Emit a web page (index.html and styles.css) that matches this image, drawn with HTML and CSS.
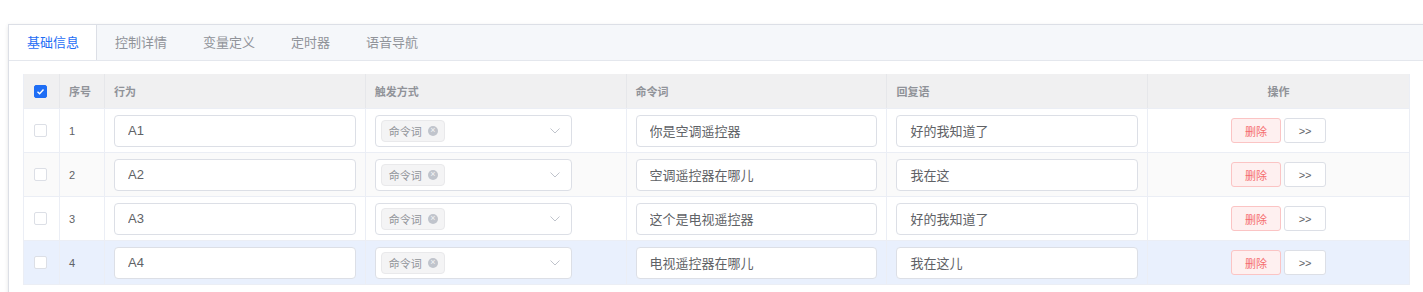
FILE: index.html
```html
<!DOCTYPE html>
<html lang="zh-CN">
<head>
    <meta charset="UTF-8">
    <title>行为配置</title>
    <link rel="stylesheet" href="styles.css">
</head>
<body>
    <div class="page">
        <div class="tab-card">
            <div class="tab-header">
                <div class="tab active">基础信息</div>
                <div class="tab">控制详情</div>
                <div class="tab">变量定义</div>
                <div class="tab">定时器</div>
                <div class="tab">语音导航</div>
            </div>

            <div class="tab-content">
                <div class="table">
                    <div class="row head">
                        <div class="cell"><span class="checkbox checked"><svg viewBox="0 0 13 13" width="13" height="13"><polyline points="3.5,6.8 5.6,8.8 9.5,4.6" fill="none" stroke="#fff" stroke-width="1.4"/></svg></span></div>
                        <div class="cell">序号</div>
                        <div class="cell">行为</div>
                        <div class="cell">触发方式</div>
                        <div class="cell">命令词</div>
                        <div class="cell">回复语</div>
                        <div class="cell center">操作</div>
                    </div>

                    <div class="row">
                        <div class="cell"><span class="checkbox"></span></div>
                        <div class="cell num">1</div>
                        <div class="cell"><input class="field" value="A1"></div>
                        <div class="cell">
                            <div class="select">
                                <span class="tag">命令词<i class="tag-close">×</i></span>
                                <svg class="arrow" viewBox="0 0 10 6" width="10" height="6"><polyline points="0.5,0.5 5,5 9.5,0.5" fill="none" stroke="#c0c4cc" stroke-width="1"/></svg>
                            </div>
                        </div>
                        <div class="cell"><input class="field" value="你是空调遥控器"></div>
                        <div class="cell"><input class="field" value="好的我知道了"></div>
                        <div class="cell center"><button class="btn danger">删除</button><button class="btn more">&gt;&gt;</button></div>
                    </div>

                    <div class="row striped">
                        <div class="cell"><span class="checkbox"></span></div>
                        <div class="cell num">2</div>
                        <div class="cell"><input class="field" value="A2"></div>
                        <div class="cell">
                            <div class="select">
                                <span class="tag">命令词<i class="tag-close">×</i></span>
                                <svg class="arrow" viewBox="0 0 10 6" width="10" height="6"><polyline points="0.5,0.5 5,5 9.5,0.5" fill="none" stroke="#c0c4cc" stroke-width="1"/></svg>
                            </div>
                        </div>
                        <div class="cell"><input class="field" value="空调遥控器在哪儿"></div>
                        <div class="cell"><input class="field" value="我在这"></div>
                        <div class="cell center"><button class="btn danger">删除</button><button class="btn more">&gt;&gt;</button></div>
                    </div>

                    <div class="row">
                        <div class="cell"><span class="checkbox"></span></div>
                        <div class="cell num">3</div>
                        <div class="cell"><input class="field" value="A3"></div>
                        <div class="cell">
                            <div class="select">
                                <span class="tag">命令词<i class="tag-close">×</i></span>
                                <svg class="arrow" viewBox="0 0 10 6" width="10" height="6"><polyline points="0.5,0.5 5,5 9.5,0.5" fill="none" stroke="#c0c4cc" stroke-width="1"/></svg>
                            </div>
                        </div>
                        <div class="cell"><input class="field" value="这个是电视遥控器"></div>
                        <div class="cell"><input class="field" value="好的我知道了"></div>
                        <div class="cell center"><button class="btn danger">删除</button><button class="btn more">&gt;&gt;</button></div>
                    </div>

                    <div class="row hover">
                        <div class="cell"><span class="checkbox"></span></div>
                        <div class="cell num">4</div>
                        <div class="cell"><input class="field" value="A4"></div>
                        <div class="cell">
                            <div class="select">
                                <span class="tag">命令词<i class="tag-close">×</i></span>
                                <svg class="arrow" viewBox="0 0 10 6" width="10" height="6"><polyline points="0.5,0.5 5,5 9.5,0.5" fill="none" stroke="#c0c4cc" stroke-width="1"/></svg>
                            </div>
                        </div>
                        <div class="cell"><input class="field" value="电视遥控器在哪儿"></div>
                        <div class="cell"><input class="field" value="我在这儿"></div>
                        <div class="cell center"><button class="btn danger">删除</button><button class="btn more">&gt;&gt;</button></div>
                    </div>
                </div>
            </div>
        </div>
    </div>
</body>
</html>
```

FILE: styles.css
```css
* {
    margin: 0;
    padding: 0;
    box-sizing: border-box;
}

body {
    font-family: 'Liberation Sans', 'Noto Sans CJK SC', sans-serif;
    background: #fff;
    overflow: hidden;
}

.page {
    padding: 24px 0 0 8px;
}

.tab-card {
    width: 1418px;
    border: 1px solid #dcdfe6;
    background: #fff;
    box-shadow: 0 2px 4px rgba(0, 0, 0, 0.08), 0 0 6px rgba(0, 0, 0, 0.03);
}

.tab-header {
    display: flex;
    height: 36px;
    background: #f5f7fa;
    border-bottom: 1px solid #e4e7ed;
}

.tab {
    padding: 0 18px;
    line-height: 35px;
    font-size: 13px;
    color: #909399;
}

.tab.active {
    background: #fff;
    color: #1f6ef5;
    border-right: 1px solid #dcdfe6;
    padding: 0 17px 0 18px;
}

.tab-content {
    padding: 13px 14px 14px;
}

.table {
    width: 1387px;
    border-left: 1px solid #ebeef5;
    border-right: 1px solid #ebeef5;
}

.row {
    display: grid;
    grid-template-columns: 36px 45px repeat(5, 1fr);
    height: 44px;
    border-bottom: 1px solid #ebeef5;
    background: #fff;
}

.row.head {
    height: 35px;
    background: #f0f0f1;
    border-bottom-color: #ebeef5;
}

.row.striped {
    background: #fafafa;
}

.row.hover {
    background: #e9f0fd;
}

.cell {
    display: flex;
    align-items: center;
    padding: 0 9px;
    border-right: 1px solid #ebeef5;
    font-size: 13px;
    color: #606266;
    min-width: 0;
}

.cell:last-child {
    border-right: none;
}

.head .cell {
    font-size: 11px;
    font-weight: bold;
    color: #909399;
    border-right-color: #e6e7ea;
}

.cell.num {
    font-size: 11px;
}

.cell.center {
    justify-content: center;
}

.checkbox {
    display: block;
    width: 13px;
    height: 13px;
    margin-left: 1px;
    border: 1px solid #dcdfe6;
    border-radius: 2px;
    background: #fff;
}

.checkbox.checked {
    background: #1f6ef5;
    border-color: #1f6ef5;
    position: relative;
}

.checkbox.checked svg {
    position: absolute;
    left: -1px;
    top: -1px;
}

.field {
    width: 100%;
    height: 32px;
    border: 1px solid #dcdfe6;
    border-radius: 4px;
    padding: 0 13px;
    font-family: 'Liberation Sans', 'Noto Sans CJK SC', sans-serif;
    font-size: 13px;
    color: #606266;
    background: #fff;
    outline: none;
}

.select {
    width: 197px;
    height: 32px;
    border: 1px solid #dcdfe6;
    border-radius: 4px;
    background: #fff;
    display: flex;
    align-items: center;
    justify-content: space-between;
    padding: 0 11px 0 5px;
}

.tag {
    display: flex;
    align-items: center;
    height: 22px;
    padding: 0 6px 0 7px;
    background: #f4f4f5;
    border: 1px solid #e9e9eb;
    border-radius: 4px;
    font-size: 11px;
    color: #909399;
}

.tag-close {
    display: inline-flex;
    align-items: center;
    justify-content: center;
    width: 10px;
    height: 10px;
    margin-left: 6px;
    border-radius: 50%;
    background: #c0c4cc;
    color: #f4f4f5;
    font-style: normal;
    font-size: 9px;
    line-height: 1;
}

.btn {
    height: 25px;
    padding: 0;
    border: 1px solid #dcdfe6;
    border-radius: 3px;
    background: #fff;
    font-family: 'Liberation Sans', 'Noto Sans CJK SC', sans-serif;
    font-size: 11px;
    color: #606266;
    margin-left: 3px;
    cursor: pointer;
}

.btn:first-child {
    margin-left: 0;
}

.btn.danger {
    width: 50px;
    background: #fef0f0;
    border-color: #fbc4c4;
    color: #f56c6c;
}

.btn.more {
    width: 42px;
}
```
